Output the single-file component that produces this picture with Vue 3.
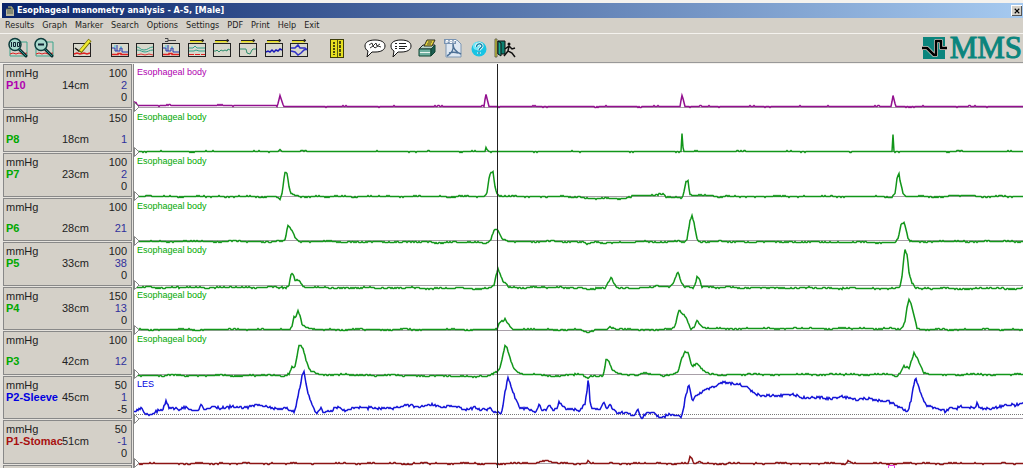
<script setup>
import { ref } from 'vue';

const menus = [
  'Results', 'Graph', 'Marker', 'Search', 'Options',
  'Settings', 'PDF', 'Print', 'Help', 'Exit',
];

const chartTools = [
  { name: 'Pressure steps', kind: 'steps' },
  { name: 'Waves', kind: 'waves' },
  { name: 'Step marker', kind: 'steps', top: 'pin' },
  { name: 'Contour', kind: 'contour', top: 'bar' },
  { name: 'Baseline', kind: 'flat', top: 'bar' },
  { name: 'Relaxation', kind: 'dip', top: 'bar' },
  { name: 'Sleeve', kind: 'blue', top: 'bar' },
  { name: 'Profile', kind: 'burst', top: 'bar' },
];

// plot x range in samples
const START = 134;
const WIDTH = 889;
const ROW = 45;

// points are [sample, height above the trace's own base]
const channels = [
  {
    id: 'P10', depth: '14cm', max: 100, value: 2, min: 0,
    label: 'Esophageal body', color: 'purple', base: 42, line: 43, noise: 0.6,
    points: [[134, 5], [136, 4], [138, 1], [277, 1], [279, 7], [280, 11], [282, 5], [284, 0], [484, 0], [486, 12], [487, 8], [489, 0], [680, 0], [682, 11], [683, 8], [685, 0], [891, 0], [893, 11], [895, 3], [896, 0]],
  },
  {
    id: 'P8', depth: '18cm', max: 150, value: 1,
    label: 'Esophageal body', color: 'green', base: 42, line: 42, noise: 0.6,
    points: [[278, 0], [280, 2], [282, 0], [485, 0], [486, 4], [488, 1], [489, 0], [681, 0], [682, 18], [683, 4], [684, 0], [892, 0], [893, 17], [894, 0]],
  },
  {
    id: 'P7', depth: '23cm', max: 100, value: 2, min: 0,
    label: 'Esophageal body', color: 'green', base: 43, line: 43, noise: 0.9,
    points: [[277, 0], [280, -2], [282, 3], [284, 18], [285, 24], [287, 23], [289, 10], [291, 2], [294, 1], [300, 0], [485, 0], [487, 4], [489, 18], [491, 25], [493, 25], [495, 10], [497, 3], [500, 1], [505, 0], [580, 0], [586, -2], [620, -2], [632, 0], [640, 1], [655, 1], [663, 3], [666, 0], [680, -1], [682, -2], [684, 4], [686, 15], [688, 16], [689, 8], [690, 2], [693, 1], [715, 1], [720, 0], [892, 0], [895, 3], [897, 18], [899, 23], [900, 16], [903, 3], [906, 0], [945, 0], [955, 1], [970, 1], [976, 0]],
  },
  {
    id: 'P6', depth: '28cm', max: 100, value: 21,
    label: 'Esophageal body', color: 'green', base: 43, line: 42, noise: 0.9,
    points: [[282, 0], [285, 1], [287, 11], [288, 16], [290, 14], [293, 9], [296, 3], [300, 0], [488, -1], [491, 3], [494, 11], [497, 12], [499, 9], [502, 3], [507, 0], [582, 0], [587, -2], [595, -1], [604, -2], [610, -1], [676, 0], [678, 1], [684, -1], [687, 2], [690, 20], [692, 26], [694, 18], [697, 3], [699, 0], [895, -1], [898, 3], [901, 17], [904, 19], [906, 12], [908, 3], [910, 0]],
  },
  {
    id: 'P5', depth: '33cm', max: 100, value: 38, min: 0,
    label: 'Esophageal body', color: 'green', base: 45, line: 43, noise: 1.1,
    points: [[286, 0], [289, 3], [291, 12], [292, 14], [294, 10], [295, 7], [298, 8], [301, 5], [303, 1], [306, 0], [490, -1], [494, 2], [496, 12], [498, 19], [500, 14], [503, 6], [507, 3], [509, 0], [580, 0], [588, -3], [595, -1], [605, 0], [608, 4], [611, 10], [613, 6], [616, 1], [620, 0], [635, -2], [642, 0], [655, 1], [670, 1], [673, 4], [676, 11], [678, 15], [681, 6], [684, 0], [689, 1], [693, 0], [695, 4], [697, 11], [699, 10], [702, 1], [706, 0], [896, -1], [900, 0], [902, 10], [904, 30], [905, 38], [907, 33], [909, 15], [912, 5], [916, 0], [920, -1]],
  },
  {
    id: 'P4', depth: '38cm', max: 150, value: 13, min: 0,
    label: 'Esophageal body', color: 'green', base: 42, line: 43, noise: 0.9,
    points: [[290, 0], [292, 4], [294, 13], [296, 13], [298, 19], [300, 14], [302, 5], [306, 2], [310, 0], [497, 0], [499, 6], [501, 8], [503, 8], [505, 11], [507, 7], [511, 2], [516, 0], [580, 0], [588, -3], [596, 0], [605, 0], [610, 3], [616, 0], [672, 0], [675, 3], [677, 12], [679, 20], [681, 17], [684, 15], [687, 10], [691, 0], [694, 2], [697, 9], [700, 5], [703, 2], [710, 1], [890, 1], [900, 0], [903, 4], [905, 8], [907, 22], [909, 30], [911, 26], [914, 14], [917, 2], [920, 0]],
  },
  {
    id: 'P3', depth: '42cm', max: 100, value: 12,
    label: 'Esophageal body', color: 'green', base: 43, line: 43, noise: 1,
    points: [[283, -1], [289, 1], [292, 7], [295, 7], [297, 18], [299, 29], [301, 29], [303, 26], [306, 14], [310, 4], [318, 0], [488, -2], [497, 3], [500, 7], [503, 20], [505, 29], [507, 27], [510, 17], [513, 7], [518, 2], [523, 0], [550, -1], [560, -2], [572, 0], [582, 0], [587, -4], [592, -1], [603, -1], [605, 8], [606, 16], [609, 12], [612, 5], [618, 1], [624, 0], [636, -1], [645, 2], [662, -2], [672, 0], [678, 3], [682, 17], [685, 22], [688, 22], [690, 15], [692, 9], [697, 11], [700, 8], [704, 3], [710, 0], [892, 0], [896, -2], [900, 1], [904, 8], [909, 7], [911, 13], [914, 22], [917, 17], [920, 10], [924, 1], [930, 0]],
  },
  {
    id: 'P2-Sleeve', depth: '45cm', max: 50, value: 1, min: -5,
    label: 'LES', color: 'blue', base: 38, line: 42, dotted: 38, noise: 2,
    points: [[134, 3], [138, 4], [141, 7], [145, 2], [150, 0], [155, 3], [163, 4], [166, 12], [169, 6], [177, 7], [180, 4], [184, 8], [190, 5], [197, 4], [201, 9], [205, 5], [230, 8], [240, 7], [262, 9], [270, 8], [280, 5], [285, 6], [294, 3], [296, 8], [298, 18], [300, 27], [302, 38], [303, 41], [304, 41], [306, 30], [308, 19], [312, 11], [316, 2], [319, 4], [321, 7], [323, 3], [332, 4], [336, 7], [345, 4], [360, 7], [370, 8], [380, 5], [400, 7], [406, 10], [420, 8], [433, 9], [440, 8], [448, 9], [460, 7], [470, 5], [475, 6], [480, 4], [487, 5], [490, 8], [493, 4], [497, 3], [501, 1], [503, 9], [505, 22], [508, 37], [510, 32], [514, 20], [520, 6], [530, 4], [536, 4], [539, 11], [543, 4], [546, 5], [549, 10], [553, 4], [557, 6], [559, 12], [566, 5], [580, 4], [585, 12], [587, 25], [588, 36], [589, 30], [590, 14], [592, 7], [600, 4], [603, 11], [607, 7], [610, 9], [618, 1], [628, 2], [633, -1], [638, 6], [641, -3], [647, 0], [654, 1], [660, -4], [668, 0], [676, 0], [681, -1], [683, 4], [685, 16], [688, 28], [689, 30], [691, 20], [692, 14], [697, 18], [707, 26], [716, 29], [726, 33], [735, 31], [745, 27], [755, 21], [765, 19], [780, 19], [800, 18], [830, 16], [850, 17], [870, 15], [890, 12], [900, 8], [906, 4], [908, 3], [911, 14], [914, 30], [916, 35], [918, 28], [923, 15], [926, 10], [935, 6], [945, 4], [951, 8], [955, 5], [961, 8], [965, 5], [975, 7], [977, 12], [980, 6], [990, 6], [1005, 9], [1015, 8], [1021, 12], [1023, 13]],
  },
  {
    id: 'P1-Stomac', depth: '51cm', max: 50, value: -1, min: 0,
    label: '', color: 'maroon', base: 43, line: 43, noise: 0.9,
    points: [[520, 0], [525, 1], [530, 0], [538, 1], [547, 3], [553, 1], [558, 0], [586, 0], [588, 3], [591, 0], [688, 0], [690, 6], [692, 5], [694, 0], [700, 2], [703, 0], [845, 0], [848, 3], [853, 0]],
  },
];

const cursor = ref(497);

function heightAt(points, x) {
  if (x <= points[0][0]) return points[0][1];
  for (let i = 1; i < points.length; i++) {
    const [x1, h1] = points[i];
    if (x <= x1) {
      const [x0, h0] = points[i - 1];
      return h0 + ((h1 - h0) * (x - x0)) / (x1 - x0);
    }
  }
  return points[points.length - 1][1];
}

// repeatable jitter, so the trace does not change between renders
function jitter(x, seed) {
  const n = Math.sin(x * 12.9898 + seed * 78.233) * 43758.5453;
  return (n - Math.floor(n)) * 2 - 1;
}

function tracePoints({ points, base, noise }, seed) {
  const out = [];
  for (let x = START; x <= START + WIDTH; x++) {
    const slow = Math.sin(x / 5 + seed * 2) * Math.sin(x / 17 + seed);
    const wobble = noise * (slow * 0.6 + jitter(x, seed) * 0.6);
    const y = Math.round(base - heightAt(points, x) - wobble);
    out.push(x + ',' + (y + 0.5));
  }
  return out.join(' ');
}

const traces = channels.map((channel, i) => tracePoints(channel, i + 1));
</script>

<template>
  <div class="window">
    <header class="title-bar">
      <svg class="title-icon" viewBox="0 0 10 10" aria-hidden="true">
        <rect x="1" y="3" width="8" height="7" fill="#b8b49c" />
        <path d="M1 3h8M2 5h6M2 7h6" stroke="#55604c" />
        <path d="M3 1h4v2" fill="none" stroke="#d8d070" />
      </svg>
      <h1 class="title">Esophageal manometry analysis - A-S, [Male]</h1>
      <button class="close" type="button" aria-label="Close">
        <svg viewBox="0 0 8 8"><path d="M1 1l6 6M7 1l-6 6" stroke="#000" stroke-width="1.5" /></svg>
      </button>
    </header>

    <nav class="menu">
      <button v-for="item in menus" :key="item" class="menu-item" type="button">{{ item }}</button>
    </nav>

    <div class="toolbar" role="toolbar">
      <div class="tools">
        <button v-for="zoom in ['in', 'out']" :key="zoom" class="tool" type="button" :aria-label="'Zoom ' + zoom">
          <svg viewBox="0 0 22 22">
            <path d="M3 5h17v14H3z" fill="none" stroke="#3aa58c" />
            <path d="M3 17l3-1 3 1 3-1 3 1 5-1" fill="none" stroke="#d22" />
            <path d="M12 12l7 7" stroke="#082c2c" stroke-width="3" stroke-linecap="round" />
            <path d="M12 12l7 7" stroke="#2a9090" />
            <circle cx="8" cy="7.5" r="6" fill="#a8d8cc" stroke="#0d3c3c" stroke-width="1.5" />
            <path v-if="zoom === 'in'" d="M4.5 5v5M6.500 5.500h2v4h-2zM10.500 5.500h2v4h-2z" fill="none" stroke="#123" />
            <path v-else d="M5 7.5h6" stroke="#123" stroke-width="2" />
          </svg>
        </button>
      </div>

      <div class="tools">
        <button class="tool" type="button" aria-label="Edit markers">
          <svg viewBox="0 0 22 22">
            <rect x="2.5" y="6.5" width="17" height="13" fill="#d8d8cc" stroke="#222" />
            <path d="M3 17l3-1 3 1 4-1 3 1 3-1" fill="none" stroke="#d22" stroke-width="1.5" />
            <path d="M4 11l4 3 3-2" fill="none" stroke="#111" stroke-width="1.5" />
            <path d="M9 15L19 3" stroke="#777000" stroke-width="4" />
            <path d="M9.5 14l9-10.5" stroke="#f0ea30" stroke-width="2.5" />
          </svg>
        </button>
      </div>

      <div class="tools tools--charts">
        <button v-for="tool in chartTools" :key="tool.name" class="tool" type="button" :aria-label="tool.name">
          <svg viewBox="0 0 22 22">
            <rect x="2.5" y="6.5" width="17" height="13" fill="#d8d8cc" stroke="#222" />
            <template v-if="tool.kind === 'steps'">
              <path d="M3 11h3v3h2V8M8 14h3v-3h2v4h6" fill="none" stroke="#2334b0" />
              <path d="M3 17.5h6v-1h3v1h7" fill="none" stroke="#e02020" stroke-width="1.5" />
              <path d="M6 8v3M12 9v2" stroke="#40c8e0" />
            </template>
            <template v-else-if="tool.kind === 'waves'">
              <path d="M3 10c3 0 3 3 7 3s5-3 9-3M3 13c4 0 5 2 8 2s4-2 8-2" fill="none" stroke="#2fa28a" />
              <path d="M3 18l4-1 4 1 4-1 4 1" fill="none" stroke="#e03030" />
            </template>
            <template v-else-if="tool.kind === 'contour'">
              <path d="M3 11h4l2-2 2 2h8M3 14h5l2-1 3 1h6" fill="none" stroke="#2fa28a" />
              <path d="M3 17.5h16" stroke="#e02020" stroke-dasharray="5 1" />
            </template>
            <path v-else-if="tool.kind === 'flat'" d="M3 14h2l1-1 2 2 2-2 2 1 2-1 2 1 1-2 2 1" fill="none" stroke="#2e8e6c" />
            <path v-else-if="tool.kind === 'dip'" d="M3 12h6l1 4 3 1 2-4 1-1h3" fill="none" stroke="#2e8e6c" />
            <path v-else-if="tool.kind === 'blue'" d="M3 15l2-1 2 1 2-2 2 2 2-2 2 1 2-2 2 1" fill="none" stroke="#1818b8" stroke-width="1.5" />
            <path v-else d="M3 11h4l3-3 2 3h5l2 2M3 14l4 1 3 3 3-2 3-3 3-1" fill="none" stroke="#3030c8" stroke-width="1.5" />
            <template v-if="tool.top === 'bar'">
              <path d="M4 4.5h13" stroke="#e8e020" stroke-width="2" />
              <path d="M4 3.5h14M16 2.5l2 1-2 1z" stroke="#222" fill="#222" />
            </template>
            <path v-if="tool.top === 'pin'" d="M5 1.5h3v3H5M8 3.5h8" fill="none" stroke="#444" />
          </svg>
        </button>
      </div>

      <div class="tools">
        <button class="tool" type="button" aria-label="Report">
          <svg viewBox="0 0 22 22">
            <rect x="4.500" y="2.500" width="13" height="18" fill="#e6e020" stroke="#3c3c08" />
            <path d="M8 5v13" stroke="#4a4a10" stroke-width="2" stroke-dasharray="2 1" />
            <path d="M14 4v15" stroke="#4a4a10" stroke-width="2" stroke-dasharray="3 1" />
            <path d="M11.500 3v17" stroke="#5a5a10" />
          </svg>
        </button>
      </div>

      <div class="tools">
        <button v-for="note in ['Comment', 'Comment list']" :key="note" class="tool" type="button" :aria-label="note">
          <svg viewBox="0 0 22 22">
            <path d="M11 3c6 0 10 2 10 6s-4 6-10 6H8l-5 5 1-6C2 13 1 11 1 9c0-4 4-6 10-6z" fill="#fff" stroke="#111" />
            <path v-if="note === 'Comment'" d="M5 8l3-2 1 3 3-3 1 3 3-2M6 11l3-2 2 2 3-2 3 1" fill="none" stroke="#333" />
            <path v-else d="M5 6.500h2M9 6.500h7M5 9.500h2M9 9.500h8M5 11.500h2M9 11.500h6" stroke="#222" />
          </svg>
        </button>
        <button class="tool" type="button" aria-label="Print">
          <svg viewBox="0 0 22 22">
            <path d="M3 12l4-4h12l-4 4z" fill="#b9d4c8" stroke="#222" />
            <path d="M3 12h12v7H3z" fill="#6fb0a0" stroke="#143" />
            <path d="M15 12l4-4v7l-4 4z" fill="#1c5c50" stroke="#143" />
            <path d="M8 9l3-6h8l-3 6z" fill="#e4d23c" stroke="#332" />
            <path d="M11 7h4M12 5h4" stroke="#443" />
            <path d="M4 15.500h10" stroke="#e8f4ee" />
          </svg>
        </button>
        <button class="tool" type="button" aria-label="PDF">
          <svg viewBox="0 0 22 22">
            <path d="M4 3h11l4 4v13H4z" fill="#dfe8f2" stroke="#7d97b4" />
            <path d="M2 2h12v5H2z" fill="#7893b2" />
            <path d="M4 6V3.500h2V5H4M8 3.500v2h2v-2zM12 6V3.500h2" fill="none" stroke="#fff" />
            <path d="M11 7c0 5 3 8 8 10M11 7c1 6-1 9-6 12M7 16c3-1 6-1 9 0" fill="none" stroke="#4f7297" stroke-width="1.500" />
          </svg>
        </button>
        <button class="tool" type="button" aria-label="Help">
          <svg viewBox="0 0 22 22">
            <circle cx="11" cy="12" r="7.500" fill="#18c4e4" />
            <circle cx="9" cy="9" r="4" fill="#6fe6f6" />
            <path d="M8.500 10c0-4 5.500-4 5.500-1 0 2-3 2-3 4.500M11 15v2" fill="none" stroke="#fff" stroke-width="3" />
            <path d="M8.500 10c0-4 5.500-4 5.500-1 0 2-3 2-3 4.500M11 15v2" fill="none" stroke="#1686a8" stroke-width="1.500" />
          </svg>
        </button>
        <button class="tool" type="button" aria-label="Exit">
          <svg viewBox="0 0 22 22">
            <path d="M1 2h2v18H1z" fill="#d8d020" stroke="#665" />
            <path d="M4 4h7v13H4z" fill="#0c8070" stroke="#111" />
            <path d="M4 4l3 2v13l-3-2z" fill="#18a890" stroke="#111" />
            <circle cx="15" cy="7" r="1.500" fill="#111" />
            <path d="M15 9l-1 5 4 2 3 4M14 14l-4 5M11 12l4-3 3 3 3-1" fill="none" stroke="#111" stroke-width="1.500" />
          </svg>
        </button>
      </div>

      <div class="logo">
        <svg class="logo-mark" viewBox="0 0 26 22" aria-hidden="true">
          <rect x="1" width="22" height="22" fill="#0b857d" />
          <path d="M0 11h5l7 7h2V4h5v7h6" fill="none" stroke="#d4d0c8" stroke-width="4" stroke-linejoin="round" />
          <path d="M0 11h5l7 7h2V4h5v7h6" fill="none" stroke="#000" stroke-width="2.500" stroke-linejoin="round" />
        </svg>
        <span class="logo-text">MMS</span>
      </div>
    </div>

    <main class="monitor">
      <section v-for="(channel, i) in channels" :key="channel.id" :class="['channel', 'channel--' + channel.color]">
        <div :class="['panel', channel.min === undefined && 'panel--no-min']">
          <div class="panel-line">
            <span>mmHg</span>
            <span class="number">{{ channel.max }}</span>
          </div>
          <div class="panel-line panel-line--value">
            <span class="name">{{ channel.id }}</span>
            <span>{{ channel.depth }}</span>
            <span class="number number--value">{{ channel.value }}</span>
          </div>
          <div v-if="channel.min !== undefined" class="panel-line">
            <span class="number">{{ channel.min }}</span>
          </div>
        </div>
        <div class="strip">
          <span class="strip-label">{{ channel.label }}</span>
          <svg class="strip-plot" :viewBox="`${START} 0 ${WIDTH} ${ROW}`" preserveAspectRatio="none">
            <line :x1="START" :x2="START + WIDTH" :y1="channel.line + 0.5" :y2="channel.line + 0.5" class="zero" />
            <line
              v-if="channel.dotted"
              :x1="START"
              :x2="START + WIDTH"
              :y1="channel.dotted + 0.5"
              :y2="channel.dotted + 0.5"
              class="zero zero--dotted" />
            <polyline class="trace" :points="traces[i]" />
          </svg>
          <svg class="strip-handle" viewBox="0 0 6 10" aria-hidden="true">
            <path d="M.5 .5l4.500 4.500-4.500 4.500z" fill="#fff" stroke="#888" />
          </svg>
        </div>
      </section>
      <section class="channel">
        <div class="panel"></div>
        <div class="strip">
          <svg class="strip-plot" :viewBox="`${START} 0 ${WIDTH} ${ROW}`" preserveAspectRatio="none">
            <path d="M888.500 10v-9.500h6v9.500" fill="none" stroke="#e23ce2" />
          </svg>
        </div>
      </section>
      <div class="cursor-area">
        <div class="cursor" :style="{ left: ((cursor - START) / WIDTH) * 100 + '%' }"></div>
      </div>
    </main>
  </div>
</template>

<style>
body {
  margin: 0;
}
</style>

<style scoped>
.window {
  --face: #d4d0c8;

  box-sizing: border-box;
  display: flex;
  flex-direction: column;
  height: 100vh;
  overflow: hidden;
  padding-top: 3px;
  background: #f4f2ee;
  color: #222;
  font-family: "Liberation Sans", Arial, sans-serif;
  font-size: 11px;
}

button {
  background: none;
  border: 0;
  color: inherit;
  font: inherit;
  padding: 0;
}

.title-bar {
  display: flex;
  align-items: center;
  flex: none;
  gap: 2px;
  height: 15px;
  margin-left: 2px;
  padding: 0 1px 0 3px;
  background: linear-gradient(to right, #0a246a, #a6caf0);
  color: #fff;
}

.title-icon {
  width: 10px;
  height: 10px;
}

.title {
  flex: 1;
  margin: 0;
  font-family: "DejaVu Sans Condensed", "DejaVu Sans", sans-serif;
  font-size: 9px;
  font-weight: bold;
  line-height: 15px;
}

.close {
  display: grid;
  place-items: center;
  width: 11px;
  height: 11px;
  background: var(--face);
  box-shadow: inset 1px 1px #fff, inset -1px -1px #555;
}

.close svg {
  width: 6px;
  height: 6px;
}

.menu {
  display: flex;
  flex: none;
  gap: 8px;
  height: 15px;
  padding-left: 5px;
  background: var(--face);
  border-bottom: 1px solid #f4f2ee;
}

.menu-item {
  font-family: "DejaVu Sans Condensed", "DejaVu Sans", sans-serif;
  font-size: 9px;
  line-height: 15px;
}

.toolbar {
  display: flex;
  align-items: center;
  flex: none;
  gap: 12px;
  height: 28px;
  padding: 0 1px 0 5px;
  background: var(--face);
  border-bottom: 1px solid #999;
}

.tools {
  display: flex;
}

.tools--charts {
  justify-content: space-between;
  width: 205px;
}

.tool {
  display: grid;
  place-items: center;
  width: 26px;
  height: 26px;
}

.tools--charts .tool {
  width: 25px;
}

.tool svg {
  width: 22px;
  height: 22px;
}

.logo {
  display: flex;
  align-items: center;
  gap: 2px;
  margin-left: auto;
}

.logo-mark {
  width: 26px;
  height: 22px;
}

.logo-text {
  color: #0b857d;
  font-family: "Liberation Serif", "Times New Roman", serif;
  font-size: 31px;
  line-height: 26px;
  -webkit-text-stroke: 1px #0b857d;
}

.monitor {
  position: relative;
  flex: 1;
  min-height: 0;
  overflow: hidden;
  margin-top: 1px;
  background: #fff;
}

.channel {
  display: grid;
  grid-template-columns: 134px 1fr;
  height: 45px;
  background: linear-gradient(to right, #e6e3de 133px, #888 133px, #888 134px, transparent 134px);
}

.channel:nth-child(even) {
  height: 44px;
}

.channel--purple {
  --trace: #93108f;
  --name: #b000b0;
}

.channel--green {
  --trace: #12961a;
  --name: #00a800;
}

.channel--blue {
  --trace: #1414d8;
  --name: #0000e0;
}

.channel--maroon {
  --trace: #8c1414;
  --name: #a81010;
}

.panel {
  box-sizing: border-box;
  margin: 0 2px 1px 3px;
  padding: 2px 4px 0 2px;
  background: var(--face);
  border: 1px solid #888;
}

.panel-line {
  display: flex;
  line-height: 12px;
}

.panel--no-min .panel-line--value {
  margin-top: 9px;
}

.name {
  width: 56px;
  color: var(--name);
  font-weight: bold;
  white-space: nowrap;
}

.number {
  margin-left: auto;
}

.number--value {
  color: #30309c;
}

.strip {
  position: relative;
  min-width: 0;
}

.strip-label {
  display: block;
  padding: 3px 0 0 3px;
  color: var(--name);
  font-size: 9px;
  line-height: 10px;
}

.strip-plot {
  position: absolute;
  top: 0;
  left: 0;
  width: 100%;
  height: 45px;
  overflow: visible;
}

.strip-handle {
  position: absolute;
  top: 38px;
  left: 0;
  width: 6px;
  height: 10px;
}

.trace {
  fill: none;
  stroke: var(--trace);
  stroke-width: 1.5px;
  vector-effect: non-scaling-stroke;
}

.zero {
  stroke: #a8a0a8;
}

.zero--dotted {
  stroke: #777;
  stroke-dasharray: 1 1;
}

.cursor-area {
  position: absolute;
  inset: 0 0 0 134px;
  pointer-events: none;
}

.cursor {
  position: absolute;
  top: 0;
  bottom: 0;
  width: 1px;
  background: #222;
}
</style>
